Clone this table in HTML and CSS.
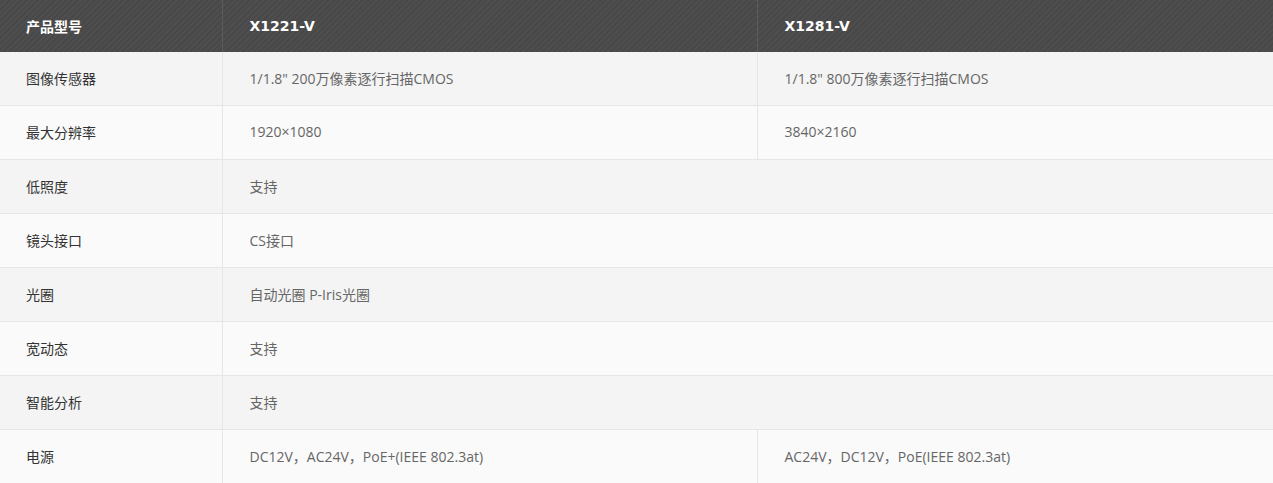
FILE: index.html
```html
<!DOCTYPE html>
<html lang="zh">
<head>
<meta charset="utf-8">
<link rel="stylesheet" href="styles.css">
</head>
<body>
<table class="spec">
  <colgroup>
    <col class="c1"><col class="c2"><col class="c3">
  </colgroup>
  <thead>
    <tr><th>产品型号</th><th class="model">X1221-V</th><th class="model">X1281-V</th></tr>
  </thead>
  <tbody>
    <tr class="odd"><td class="k">图像传感器</td><td>1/1.8" 200万像素逐行扫描CMOS</td><td>1/1.8" 800万像素逐行扫描CMOS</td></tr>
    <tr class="even"><td class="k">最大分辨率</td><td>1920×1080</td><td>3840×2160</td></tr>
    <tr class="odd"><td class="k">低照度</td><td colspan="2">支持</td></tr>
    <tr class="even"><td class="k">镜头接口</td><td colspan="2">CS接口</td></tr>
    <tr class="odd"><td class="k">光圈</td><td colspan="2">自动光圈 P-Iris光圈</td></tr>
    <tr class="even"><td class="k">宽动态</td><td colspan="2">支持</td></tr>
    <tr class="odd"><td class="k">智能分析</td><td colspan="2">支持</td></tr>
    <tr class="even"><td class="k">电源</td><td>DC12V，AC24V，PoE+(IEEE 802.3at)</td><td>AC24V，DC12V，PoE(IEEE 802.3at)</td></tr>
  </tbody>
</table>
</body>
</html>
```
FILE: styles.css
```css
html, body {
  margin: 0;
  padding: 0;
  background: #fafafa;
}
body {
  font-family: "Open Sans", "Noto Sans CJK SC", sans-serif;
  font-size: 14px;
}
.spec {
  width: 1273px;
  border-collapse: collapse;
  table-layout: fixed;
}
.c1 { width: 222px; }
.c2 { width: 535px; }
.c3 { width: 516px; }
.spec th {
  height: 52px;
  padding: 0 0 1px 26px;
  text-align: left;
  color: #fff;
  font-weight: bold;
  font-size: 14px;
  background-color: #4a4a4a;
  background-image: repeating-linear-gradient(135deg, rgba(255,255,255,0.025) 0 2px, rgba(0,0,0,0.03) 2px 4px);
  border-left: 1px solid #5c5c5c;
  box-sizing: border-box;
}
.spec th:first-child { border-left: 0; }
.spec th.model {
  padding-left: 27px;
  font-family: "DejaVu Sans", "Noto Sans CJK SC", sans-serif;
  font-size: 14px;
}
.spec td {
  height: 51px;
  padding: 0 0 2px 27px;
  color: #666;
  border-top: 1px solid #e6e6e6;
  border-left: 1px solid #e6e6e6;
  font-size: 14px;
}
.spec tbody tr:first-child td { border-top: 0; }
.spec td.k {
  color: #333;
  padding-left: 26px;
  border-left: 0;
}
.odd { background: #f4f4f4; }
.even { background: #fafafa; }
```
